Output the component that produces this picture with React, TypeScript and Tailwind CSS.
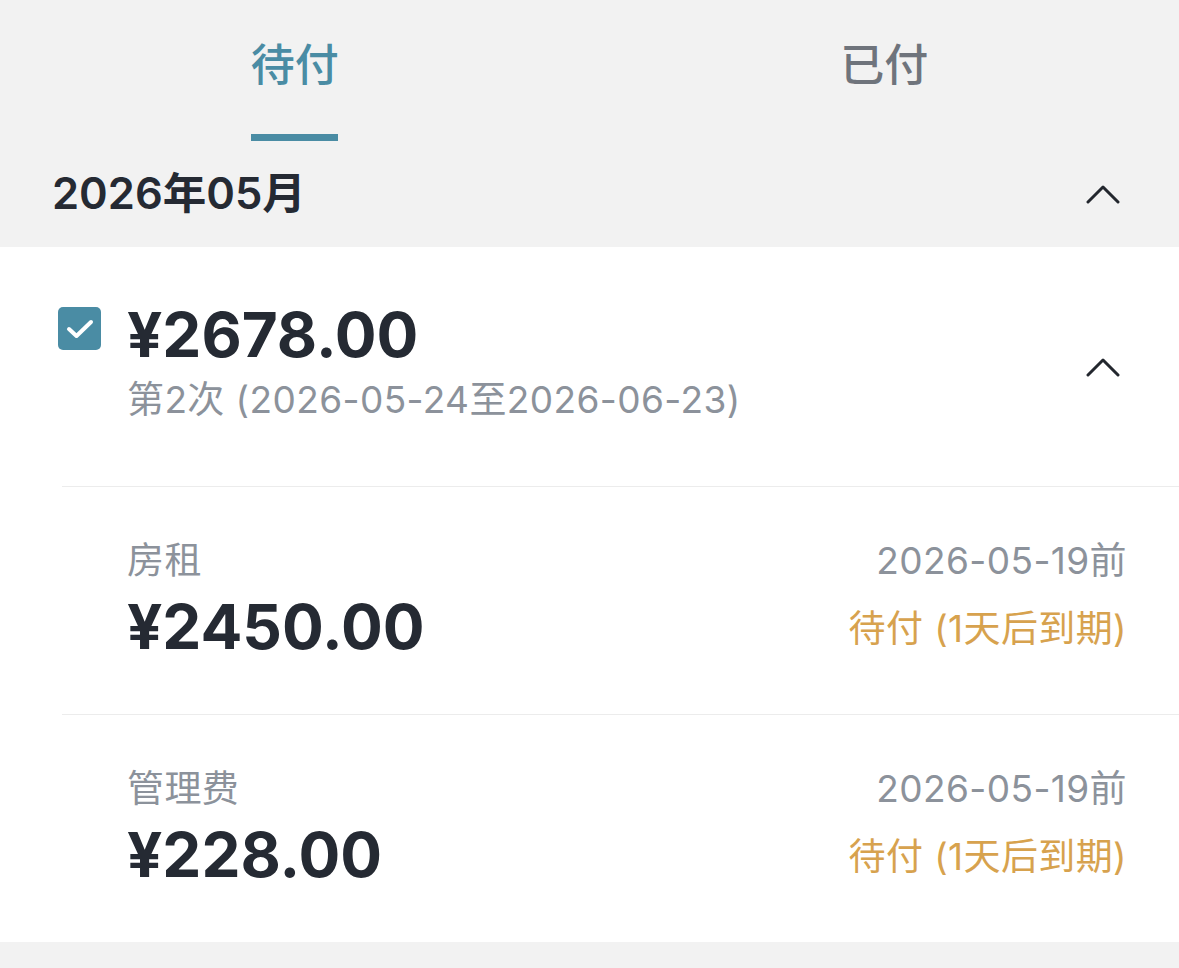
import React from 'react';

const font = { fontFamily: 'Inter, "Noto Sans CJK SC", sans-serif' };

const ChevronUp: React.FC = () => (
  <svg width="34" height="20" viewBox="0 0 34 20" fill="none">
    <path d="M2 18 L17 3 L32 18" stroke="#23272e" strokeWidth="3" strokeLinecap="round" strokeLinejoin="round" />
  </svg>
);

const BillItem: React.FC<{ name: string; amount: string; due: string; status: string }> = ({ name, amount, due, status }) => (
  <div className="border-t border-[#ececec] ml-[62px] h-[228px] flex justify-between pl-[65px] pr-[52px] pt-[52px]">
    <div className="flex flex-col">
      <span className="text-[37px] leading-[44px] tracking-[0.4px] text-[#8c929b]">{name}</span>
      <span className="mt-[6px] text-[62px] leading-[76px] font-bold text-[#252a33]">{amount}</span>
    </div>
    <div className="flex flex-col items-end">
      <span className="text-[37px] leading-[44px] tracking-[0.4px] text-[#8c929b]">{due}</span>
      <span className="text-[37px] leading-[44px] tracking-[0.4px] mt-[24px] text-[#d7a24e]">{status}</span>
    </div>
  </div>
);

export default function App() {
  return (
    <div className="min-h-screen bg-[#f2f2f2]" style={font}>
      <div className="flex h-[141px]">
        <div className="flex-1 flex flex-col items-center">
          <span className="mt-[40px] text-[44px] leading-[50px] font-medium text-[#4a8ca4]">待付</span>
          <div className="mt-auto h-[7px] w-[87px] bg-[#4a8ca4]" />
        </div>
        <div className="flex-1 flex flex-col items-center">
          <span className="mt-[40px] text-[44px] leading-[50px] font-medium text-[#6f747c]">已付</span>
        </div>
      </div>
      <div className="h-[106px] flex items-center justify-between pl-[52px] pr-[59px]">
        <span className="text-[43.5px] font-semibold text-[#252a33]">2026年05月</span>
        <ChevronUp />
      </div>
      <div className="bg-white">
        <div className="h-[239px] flex pl-[58px] pr-[59px] pt-[60px]">
          <div className="w-[43px] h-[43px] rounded-[5px] bg-[#4a8ca4] flex items-center justify-center">
            <svg width="28" height="22" viewBox="0 0 28 22" fill="none">
              <path d="M3 11 L10.5 18 L25 4" stroke="white" strokeWidth="4" strokeLinecap="round" strokeLinejoin="round" />
            </svg>
          </div>
          <div className="flex flex-col ml-[26px] -mt-[10px]">
            <span className="text-[62px] leading-[76px] font-bold text-[#252a33]">¥2678.00</span>
            <span className="mt-[5px] text-[37px] leading-[44px] tracking-[0.4px] text-[#8c929b]">第2次 (2026-05-24至2026-06-23)</span>
          </div>
          <div className="ml-auto mt-[50px]">
            <ChevronUp />
          </div>
        </div>
        <BillItem name="房租" amount="¥2450.00" due="2026-05-19前" status="待付 (1天后到期)" />
        <BillItem name="管理费" amount="¥228.00" due="2026-05-19前" status="待付 (1天后到期)" />
      </div>
    </div>
  );
}
